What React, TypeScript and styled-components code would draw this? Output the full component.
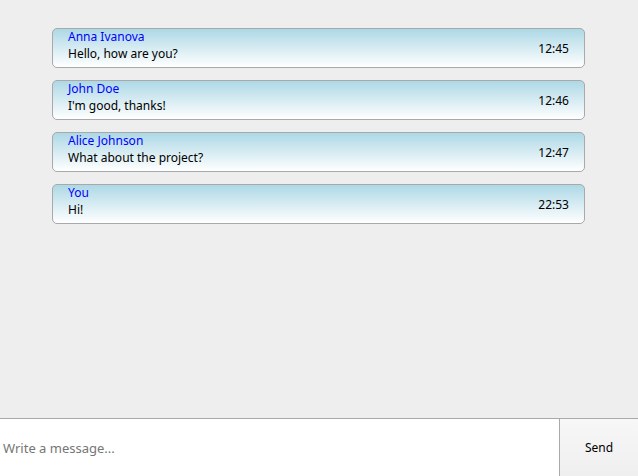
import React from 'react';
import styled, {createGlobalStyle} from "styled-components";

const Global = createGlobalStyle`
  html, body {
    margin: 0;
    padding: 0;
    height: 100%;
  }
  #root {
    height: 100%;
  }
  body {
    background: #eeeeee;
    font-family: "Noto Sans", "Open Sans", sans-serif;
    font-size: 12px;
  }
`

const Page = styled.div`
  height: 476px;
  display: flex;
  flex-direction: column;
`

const List = styled.div`
  flex: 1;
  display: flex;
  flex-direction: column;
  gap: 12px;
  padding: 28px 53px 0 52px;
`

const Message = styled.div`
  box-sizing: border-box;
  height: 40px;
  border: 1px solid #a9a9a9;
  border-radius: 5px;
  background: linear-gradient(to bottom, #add8e6, #ffffff);
  padding: 0 15px;
  display: flex;
  justify-content: space-between;
  align-items: center;
  color: #000;
`

const Body = styled.div`
  align-self: flex-start;
  margin-top: -1px;
  display: flex;
  flex-direction: column;
  line-height: 17px;
`

const Author = styled.div`
  color: blue;
`

const Time = styled.div`
  line-height: 17px;
`

const Composer = styled.div`
  height: 58px;
  box-sizing: border-box;
  border-top: 1px solid #a9a9a9;
  display: flex;
  background: #fff;
`

const Input = styled.input`
  flex: 1;
  border: none;
  outline: none;
  padding: 0 3px;
  font-family: "Noto Sans", "Open Sans", sans-serif;
  font-size: 13px;
  background: #fff;

  &::placeholder {
    color: #767676;
  }
`

const SendButton = styled.button`
  width: 79px;
  border: none;
  border-left: 1px solid #a9a9a9;
  background: linear-gradient(to bottom, #f7f7f7, #efefef);
  font-family: "Noto Sans", "Open Sans", sans-serif;
  font-size: 12px;
  color: #000;
  padding: 0;
`

const messages = [
    {author: 'Anna Ivanova', text: 'Hello, how are you?', time: '12:45'},
    {author: 'John Doe', text: "I'm good, thanks!", time: '12:46'},
    {author: 'Alice Johnson', text: 'What about the project?', time: '12:47'},
    {author: 'You', text: 'Hi!', time: '22:53'},
];

const App: React.FC = () => {
    return (
        <Page>
            <Global/>
            <List>
                {messages.map((m, i) => (
                    <Message key={i}>
                        <Body>
                            <Author>{m.author}</Author>
                            <div>{m.text}</div>
                        </Body>
                        <Time>{m.time}</Time>
                    </Message>
                ))}
            </List>
            <Composer>
                <Input placeholder="Write a message..."/>
                <SendButton>Send</SendButton>
            </Composer>
        </Page>
    );
}

export default App;
